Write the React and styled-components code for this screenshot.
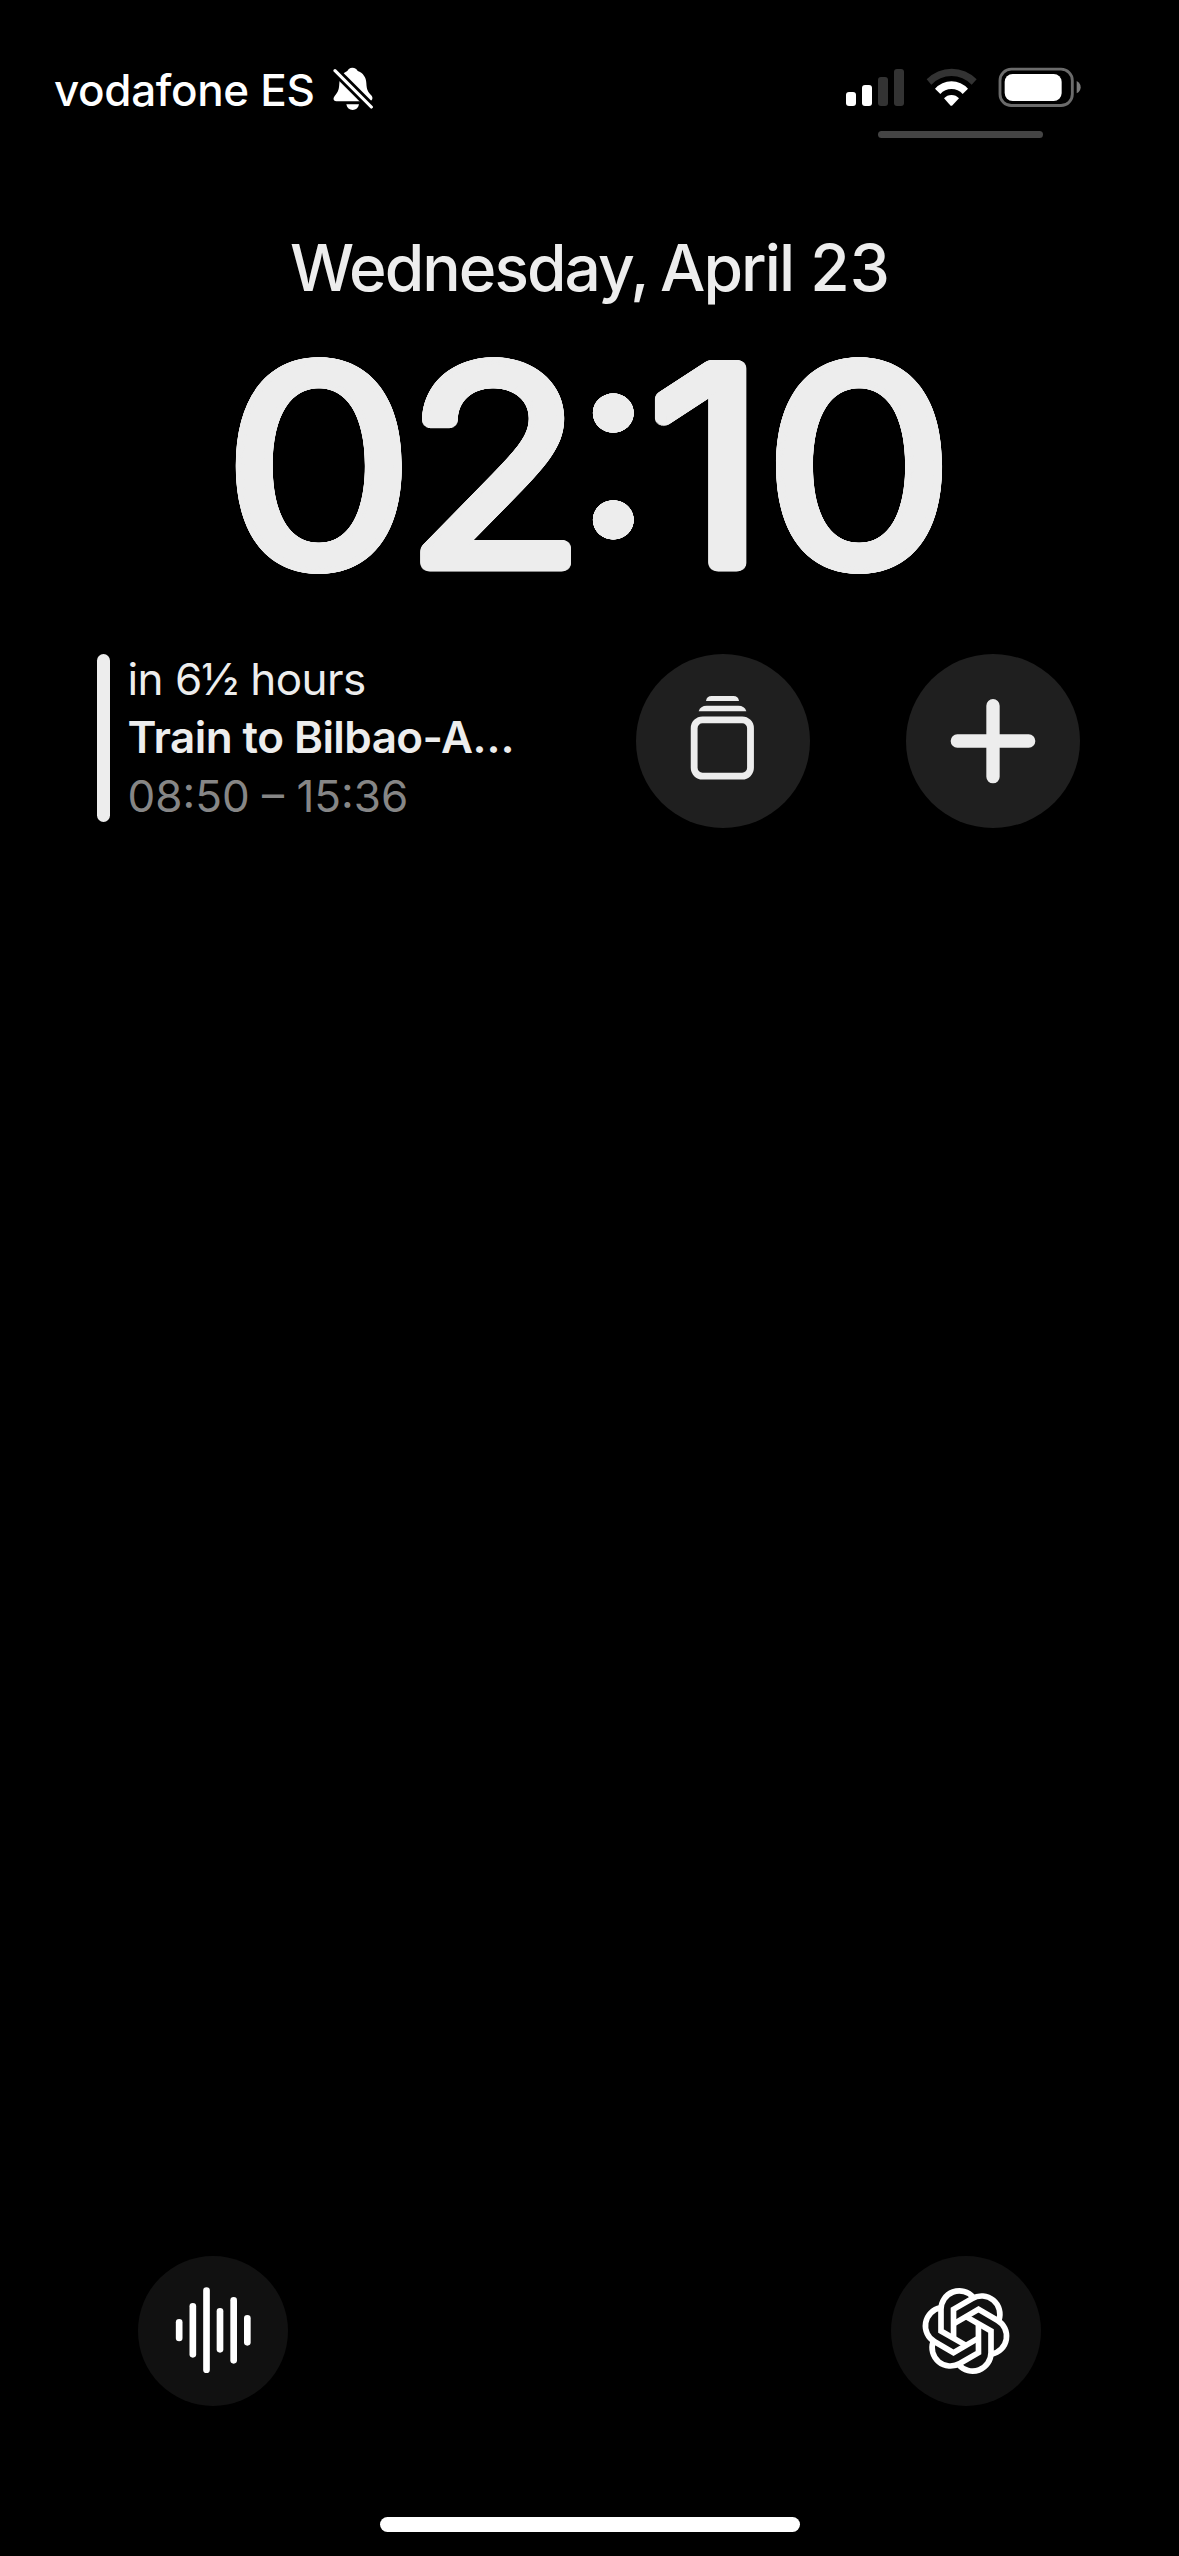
import React from "react";
import styled, { createGlobalStyle } from "styled-components";

const INK = "#ededed";

const GlobalStyle = createGlobalStyle`
  *, *::before, *::after { box-sizing: border-box; }
  html, body { margin: 0; background: #000; }
  body { font-family: Inter, "Liberation Sans", sans-serif; }
  svg { display: block; flex: none; }
`;

const Screen = styled.main`
  display: flex;
  flex-direction: column;
  width: 1179px;
  height: 2556px;
  overflow: hidden;
  background: #000;
  color: ${INK};
`;

/* Status bar */

const StatusBar = styled.header`
  display: flex;
  justify-content: space-between;
  align-items: flex-start;
  height: 228px;
  padding: 59px 98px 0 54px;
  color: #fff;
`;

const CarrierGroup = styled.div`
  display: flex;
  align-items: flex-start;
`;

const Carrier = styled.span`
  width: 279px;
  font-size: 44px;
  font-weight: 500;
  line-height: 63px;
  letter-spacing: -0.35px;
  white-space: nowrap;
`;

const BellWrap = styled.span`
  padding-top: 8px;
`;

const SystemGroup = styled.div`
  display: flex;
  flex-direction: column;
  align-items: flex-end;
  padding-top: 8px;
`;

const SystemIcons = styled.div`
  display: flex;
  height: 40px;
`;

const SignalBars = styled.div`
  display: flex;
  align-items: flex-end;
  gap: 6px;
  height: 39px;
  margin-right: 22px;
`;

const SignalBar = styled.span`
  width: 10px;
  height: ${(p) => p.$height}px;
  border-radius: 3px;
  background: ${(p) => (p.$on ? "#fff" : "#333")};
`;

const BatteryIcon = styled.svg`
  margin-left: 21px;
`;

const Grabber = styled.span`
  width: 165px;
  height: 7px;
  margin: 24px 38px 0 0;
  border-radius: 4px;
  background: #444;
`;

/* Date and clock */

const DateLine = styled.div`
  height: 80px;
  padding-left: 290px;
  font-size: 64px;
  font-weight: 500;
  line-height: 80px;
  letter-spacing: -1.95px;
  word-spacing: -2px;
  white-space: nowrap;
`;

const Day = styled.span`
  margin-left: 4px;
  letter-spacing: 0;
`;

const Clock = styled.time`
  display: flex;
  height: 346px;
  padding: 38px 0 0 247px;
  font-size: 270.5px;
  font-weight: 350;
  line-height: 240px;
  transform: scaleX(1.045);
`;

/* A ring of hard shadows gives the numerals their rounded corners. */
const ring = (radius) =>
  Array.from({ length: 48 }, (_, i) => {
    const a = (i * Math.PI) / 24;
    return `${(Math.cos(a) * radius).toFixed(2)}px ${(Math.sin(a) * radius).toFixed(2)}px 0 ${INK}`;
  }).join(", ");

const Numeral = styled.span`
  width: ${(p) => p.$width}px;
  text-shadow: ${ring(7.3)};
  transform: scaleX(${(p) => p.$stretch || 1});
`;

const Colon = styled.span`
  width: 75.6px;
  margin-top: -28px;
  font-weight: 400;
  text-shadow: ${ring(1.7)};
`;

/* Widgets */

const Widgets = styled.section`
  display: flex;
  align-items: flex-start;
  padding-left: 97px;
`;

const CalendarWidget = styled.article`
  display: flex;
  width: 539px;
`;

const EventBar = styled.span`
  width: 13px;
  height: 168px;
  border-radius: 7px;
  background: ${INK};
`;

const EventText = styled.div`
  display: flex;
  flex-direction: column;
  margin: -4px 0 0 17.5px;
`;

const EventLine = styled.span`
  height: 58.4px;
  font-size: 44px;
  line-height: 58.4px;
  font-weight: ${(p) => p.$weight || 400};
  letter-spacing: ${(p) => p.$tracking || 0}px;
  color: ${(p) => p.$color || INK};
  white-space: nowrap;
`;

const RoundButton = styled.button`
  display: flex;
  width: ${(p) => p.$size}px;
  height: ${(p) => p.$size}px;
  margin: 0 ${(p) => p.$gap || 0}px 0 0;
  padding: 0;
  border: 0;
  border-radius: 50%;
  background: ${(p) => p.$tone};
`;

/* Bottom */

const QuickActions = styled.nav`
  display: flex;
  justify-content: space-between;
  margin-top: auto;
  padding: 0 138px;
`;

const HomeIndicator = styled.div`
  width: 420px;
  height: 15px;
  margin: 111px 0 24px 380px;
  border-radius: 8px;
  background: #fff;
`;

const BellSlash = () => (
  <svg width="40" height="43.33" viewBox="0 0 120 130">
    <path
      fill="#fff"
      d="M58 2C66 2 72 6 74 12C90 17 100 32 100 48C101 68 104 74 116 86C121 93 118 103 108 103H10C1 103 -1 94 5 87C16 74 18 68 19 48C20 34 28 18 43 12C46 6 50 2 58 2Z"
    />
    <path fill="#fff" d="M40 112H78C76 123 69 129 59 129S42 123 40 112Z" />
    <path stroke="#000" strokeWidth="26" d="M-6 -1L127 132" />
    <path stroke="#fff" strokeWidth="9.5" strokeLinecap="round" d="M6 11L115 120" />
  </svg>
);

const Wifi = () => (
  <svg width="51" height="40" viewBox="288 51 153 120">
    <path fill="#333" d="M290 88A104 104 0 0 1 440 88L425 104A84 84 0 0 0 304 104Z" />
    <path fill="#fff" d="M315 116A66 66 0 0 1 414 116L398 132A45 45 0 0 0 331 132Z" />
    <path fill="#fff" d="M342 145A30 30 0 0 1 387 145L366 167Q364 168 362 167Z" />
  </svg>
);

const Battery = () => (
  <BatteryIcon width="83" height="40" viewBox="505 51 249 120">
    <rect x="511" y="57.5" width="217" height="109" rx="34" fill="none" stroke="#6b6b6b" strokeWidth="8.5" />
    <rect x="525" y="72" width="171" height="81" rx="24" fill="#fff" />
    <path fill="#7a7a7a" d="M741 93Q753 100 753 111.500Q753 123 741 130Z" />
  </BatteryIcon>
);

const StackIcon = () => (
  <svg width="174" height="174" viewBox="48 42 522 522">
    <path fill={INK} d="M258 183Q260 168 275 168H340Q355 168 357 183Z" />
    <path fill={INK} d="M236 213.500Q241 197 260 197H355Q374 197 379 213.500Z" />
    <rect x="222.500" y="239.500" width="169" height="169" rx="25" fill="none" stroke={INK} strokeWidth="20.500" />
  </svg>
);

const PlusIcon = () => (
  <svg width="174" height="174" viewBox="858 42 522 522">
    <path stroke={INK} strokeWidth="40" strokeLinecap="round" d="M1012 303H1226M1119 197V410" />
  </svg>
);

const WAVE = [
  [147.5, 207, 274],
  [188.5, 159, 323],
  [229.5, 112, 369],
  [270, 174, 308],
  [311, 141, 341],
  [352, 195, 287],
];

const WaveIcon = () => (
  <svg width="150" height="150" viewBox="24 18 450 450">
    {WAVE.map(([x, top, bottom]) => (
      <rect key={x} x={x - 10} y={top} width="20" height={bottom - top} rx="10" fill="#fff" />
    ))}
  </svg>
);

const KnotIcon = () => (
  <svg width="150" height="150" viewBox="-225 -225 450 450">
    {[0, 60, 120, 180, 240, 300].map((angle) => (
      <path
        key={angle}
        transform={`rotate(${angle})`}
        fill="none"
        stroke="#fff"
        strokeWidth="17"
        d="M0 43L-75 0V-65A55 55 0 0 1 22 -101"
      />
    ))}
  </svg>
);

export default function App() {
  return (
    <>
      <GlobalStyle />
      <Screen>
        <StatusBar>
          <CarrierGroup>
            <Carrier>vodafone ES</Carrier>
            <BellWrap>
              <BellSlash />
            </BellWrap>
          </CarrierGroup>
          <SystemGroup>
            <SystemIcons>
              <SignalBars>
                <SignalBar $height={14} $on />
                <SignalBar $height={21} $on />
                <SignalBar $height={29} />
                <SignalBar $height={37} />
              </SignalBars>
              <Wifi />
              <Battery />
            </SystemIcons>
            <Grabber />
          </SystemGroup>
        </StatusBar>

        <DateLine>
          Wednesday, April <Day>23</Day>
        </DateLine>
        <Clock>
          <Numeral $width={169.3} $stretch={1.08}>0</Numeral>
          <Numeral $width={157} $stretch={1.045}>2</Numeral>
          <Colon>:</Colon>
          <Numeral $width={115.5} $stretch={1.09}>1</Numeral>
          <Numeral $width={168.8} $stretch={1.08}>0</Numeral>
        </Clock>

        <Widgets>
          <CalendarWidget>
            <EventBar />
            <EventText>
              <EventLine $tracking={-0.55}>in 6½ hours</EventLine>
              <EventLine $weight={600} $tracking={-0.55}>Train to Bilbao-A…</EventLine>
              <EventLine $color="#868686">08:50 – 15:36</EventLine>
            </EventText>
          </CalendarWidget>
          <RoundButton $size={174} $gap={96} $tone="#1f1f1f" aria-label="Stack">
            <StackIcon />
          </RoundButton>
          <RoundButton $size={174} $tone="#1f1f1f" aria-label="Add">
            <PlusIcon />
          </RoundButton>
        </Widgets>

        <QuickActions>
          <RoundButton $size={150} $tone="#111" aria-label="Voice">
            <WaveIcon />
          </RoundButton>
          <RoundButton $size={150} $tone="#111" aria-label="Assistant">
            <KnotIcon />
          </RoundButton>
        </QuickActions>
        <HomeIndicator />
      </Screen>
    </>
  );
}
